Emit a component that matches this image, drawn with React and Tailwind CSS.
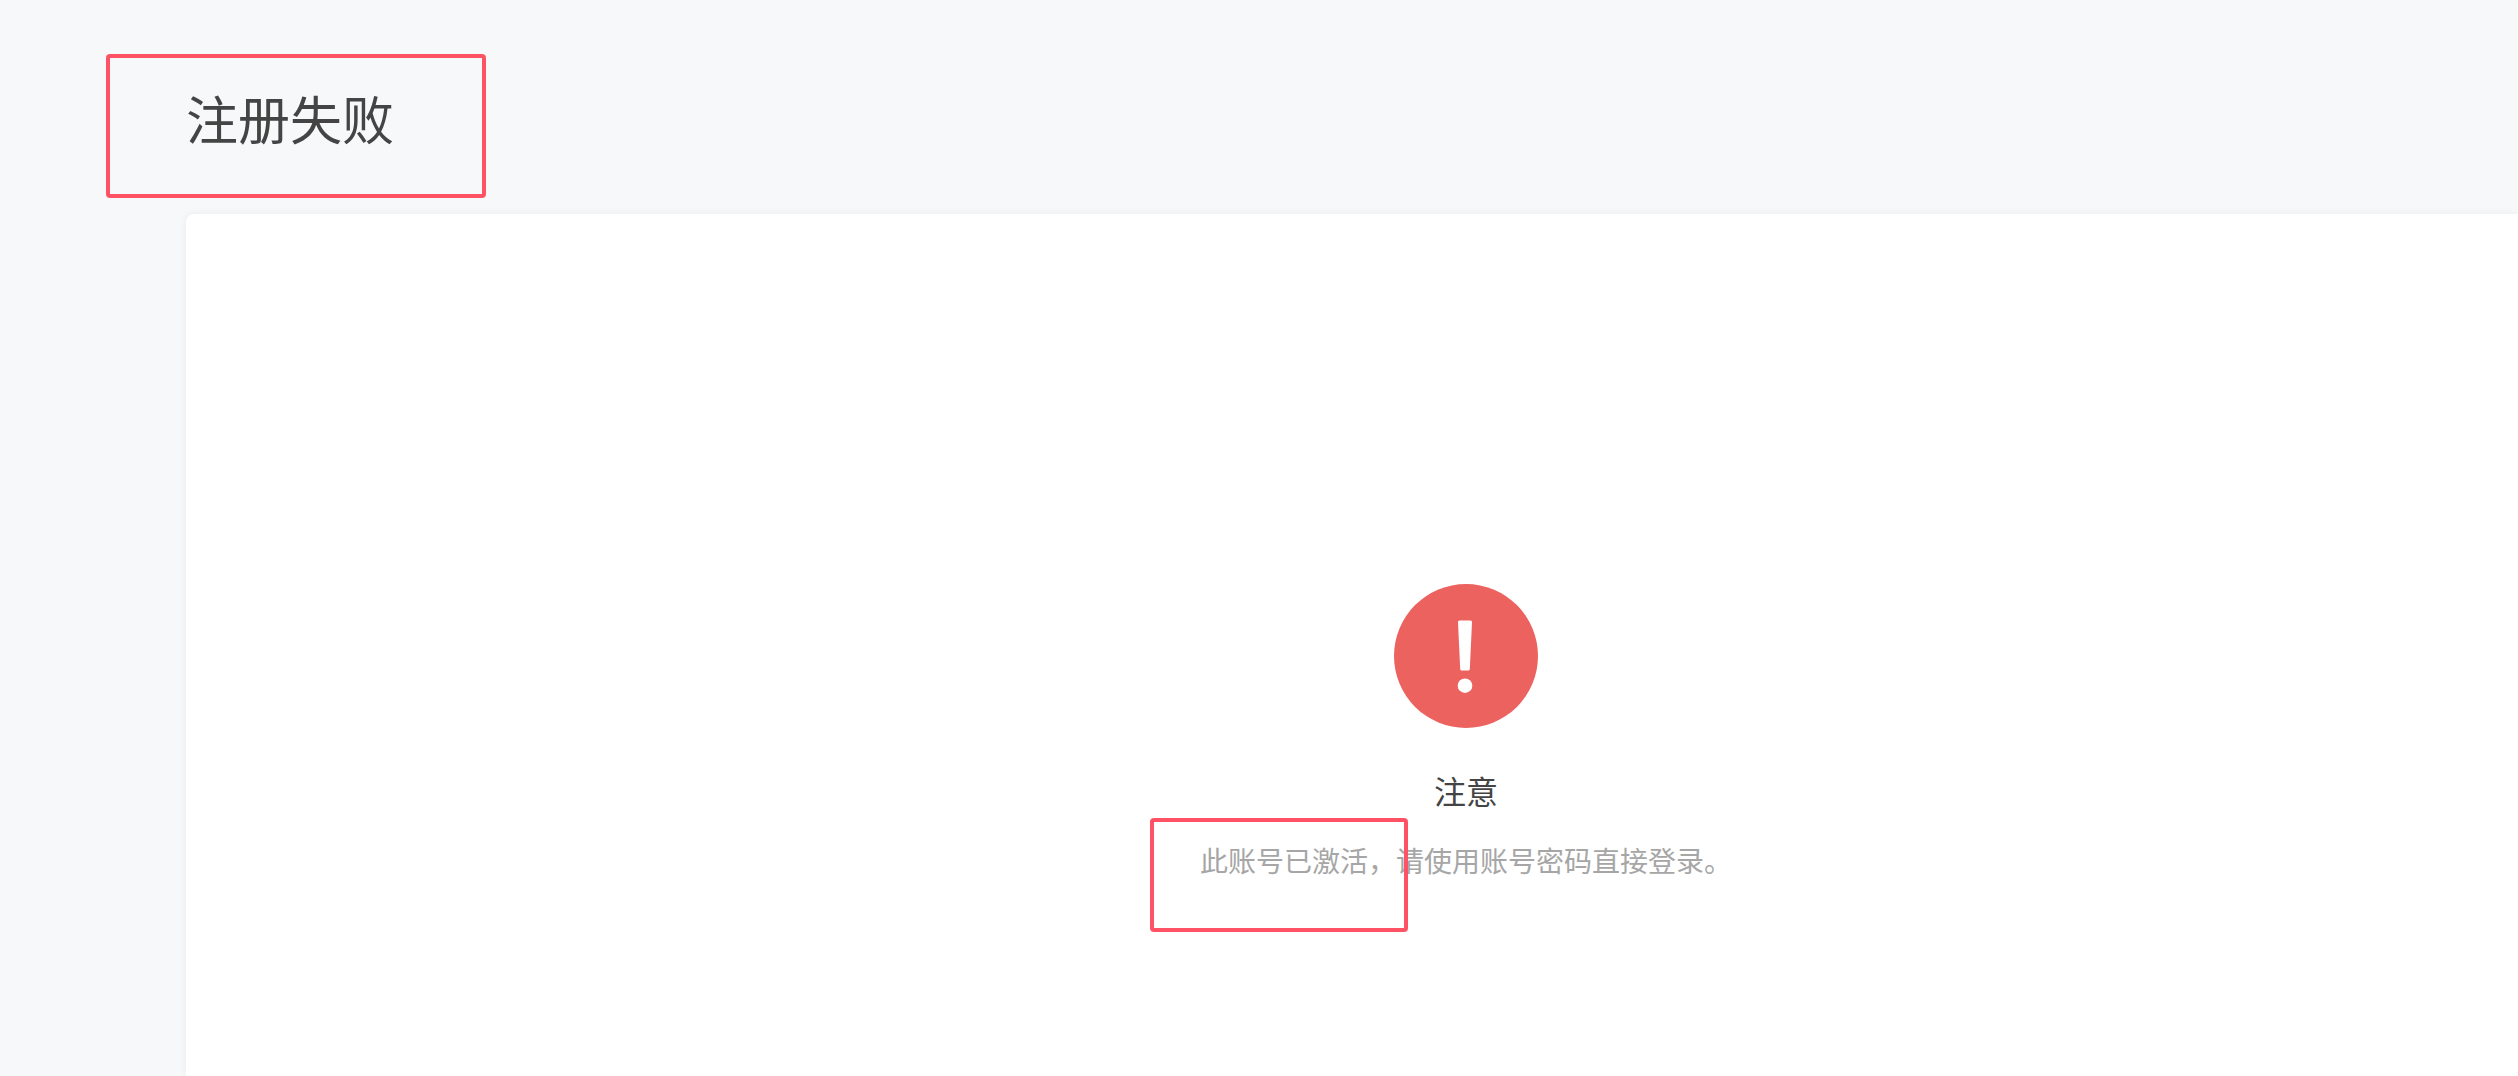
import React from 'react';

const result = {
  page: '注册失败',
  title: '注意',
  message: '此账号已激活，请使用账号密码直接登录。',
};

const ErrorIcon = () => (
  <svg className="w-36 h-36" viewBox="0 0 144 144" aria-hidden="true">
    <circle cx="72" cy="72" r="72" fill="#ec625f" />
    <path d="M65.500 36.500h11q1.500 0 1.500 1.500l-2.200 47q-.1 1.500-1.500 1.500h-6.600q-1.400 0-1.500-1.500L64 38q0-1.500 1.500-1.500z" fill="#fff" />
    <circle cx="71" cy="101.700" r="7.300" fill="#fff" />
  </svg>
);

const App = () => {
  return (
    <div lang="zh-CN" className="flex flex-col min-h-screen pl-[186px] bg-[#f7f8fa] overflow-hidden font-['Noto_Sans_CJK_SC','Noto_Sans',sans-serif]">
      {/* Page Title */}
      <header className="pt-[78px] pb-14">
        <div className="relative w-fit">
          <h1 className="text-[52px] leading-[80px] text-[#444444]">{result.page}</h1>
          <div className="absolute -left-20 -top-6 w-[380px] h-36 border-4 border-[#ff5264] rounded-sm"></div>
        </div>
      </header>

      {/* Result Card */}
      <main className="flex-1 flex flex-col items-center pt-[370px] pl-[228px] pb-36 bg-white rounded-tl-lg shadow-[0_0_8px_rgba(0,0,0,0.06)]">
        <ErrorIcon />
        <h2 className="mt-[38px] text-[32px] leading-[48px] text-[#444444]">{result.title}</h2>
        <div className="relative mt-6">
          <p className="text-[28px] leading-[44px] text-[#a6a6a6]">{result.message}</p>
          <div className="absolute -left-[50px] -top-5 w-[258px] h-[114px] border-4 border-[#ff5264] rounded-sm"></div>
        </div>
      </main>
    </div>
  );
};

export default App;
